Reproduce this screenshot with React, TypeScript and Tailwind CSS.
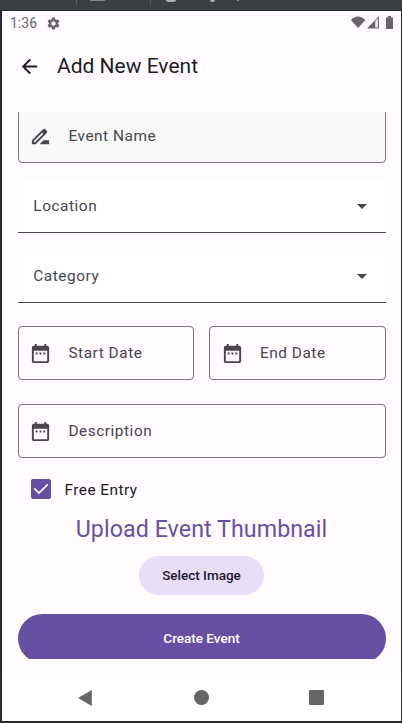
import type { ReactNode } from "react";

const icons = {
  calendar:
    "M19 4h-1V2h-2v2H8V2H6v2H5c-1.11 0-1.99.9-1.99 2L3 20c0 1.1.89 2 2 2h14c1.1 0 2-.9 2-2V6c0-1.1-.9-2-2-2zm0 16H5V9h14v11zM9 13H7v-2h2v2zm4 0h-2v-2h2v2zm4 0h-2v-2h2v2z",
  edit:
    "M18.41 5.8 17.2 4.59c-.78-.78-2.05-.78-2.83 0l-2.68 2.68L3 15.96V20h4.04l8.74-8.74 2.63-2.63c.79-.78.79-2.05 0-2.83zM6.21 18H5v-1.21l8.66-8.66 1.21 1.21L6.21 18zM11 20l4-4h6v4H11z",
  back: "M20 11H7.83l5.59-5.59L12 4l-8 8 8 8 1.41-1.41L7.83 13H20v-2z",
  gear:
    "M19.14 12.94c.04-.3.06-.61.06-.94 0-.32-.02-.64-.07-.94l2.03-1.58a.49.49 0 0 0 .12-.61l-1.92-3.32a.488.488 0 0 0-.59-.22l-2.39.96c-.5-.38-1.03-.7-1.62-.94l-.36-2.54a.484.484 0 0 0-.48-.41h-3.84c-.24 0-.43.17-.47.41l-.36 2.54c-.59.24-1.13.57-1.62.94l-2.39-.96c-.22-.08-.47 0-.59.22L2.74 8.87c-.12.21-.08.47.12.61l2.03 1.58c-.05.3-.09.63-.09.94s.02.64.07.94l-2.03 1.58a.49.49 0 0 0-.12.61l1.92 3.32c.12.22.37.29.59.22l2.39-.96c.5.38 1.03.7 1.62.94l.36 2.54c.05.24.24.41.48.41h3.84c.24 0 .44-.17.47-.41l.36-2.54c.59-.24 1.13-.56 1.62-.94l2.39.96c.22.08.47 0 .59-.22l1.92-3.32c.12-.22.07-.47-.12-.61l-2.01-1.58zM12 15.6c-1.98 0-3.6-1.62-3.6-3.6s1.62-3.6 3.6-3.6 3.6 1.62 3.6 3.6-1.62 3.6-3.6 3.6z",
};

function Icon({ d, className }: { d: string; className: string }) {
  return (
    <svg viewBox="0 0 24 24" fill="currentColor" className={`shrink-0 ${className}`}>
      <path d={d} />
    </svg>
  );
}

function Outlined({ icon, children, className = "" }: { icon: string; children: ReactNode; className?: string }) {
  return (
    <div className={`flex h-[54px] items-center rounded-[4px] border border-[#7a757f] pl-[10.900px] text-[#49454f] ${className}`}>
      <Icon d={icon} className="size-[23px]" />
      <span className="ml-[16px] pt-[2px] text-[15.4px] tracking-[0.54px]">{children}</span>
    </div>
  );
}

function Dropdown({ children }: { children: ReactNode }) {
  return (
    <div className="flex h-[54px] items-center justify-between rounded-t-[4px] border-b border-[#49454f] bg-white pr-[18.500px] pl-[15.800px] text-[#49454f]">
      <span className="pt-[2px] text-[15.4px] tracking-[0.54px]">{children}</span>
      <svg viewBox="0 0 10 5" className="mt-px h-[5px] w-[10px]" fill="currentColor">
        <path d="M0 0h10L5 5z" />
      </svg>
    </div>
  );
}

export default function App() {
  return (
    <div className="flex h-[723px] w-[402px] flex-col overflow-hidden bg-[#2b2b2d] font-['Roboto','Noto_Sans',sans-serif]">
      <div className="flex h-[11px] shrink-0 items-start border-b border-[#2b2b2d] bg-[#3c3f41]">
        <span className="ml-[76px] h-[5px] w-px bg-[#5f5c5b]" />
        <span className="ml-[13px] h-px w-[15px] bg-[#85888a]" />
        <span className="ml-[45px] h-[5px] w-px bg-[#555759]" />
        <span className="ml-[15px] h-[2px] w-[10px] rounded-b-full bg-[#afb1b3]" />
        <span className="ml-[34px] h-[2px] w-[5px] rounded-b-full bg-[#afb1b3]" />
        <span className="ml-[22px] h-px w-[2px] bg-[#85888a]" />
      </div>
      <div className="mr-px mb-[2px] ml-[2px] flex grow flex-col bg-[#fffbff]">
        <header className="flex h-[24px] shrink-0 items-center pr-[8px] pl-[8px] text-[#67656a]">
          <span className="w-[26px] text-[14px] leading-none whitespace-nowrap">1:36</span>
          <Icon d={icons.gear} className="ml-[10px] size-[15px]" />
          <svg viewBox="0 0 42 13" className="mt-[-1px] ml-auto h-[13px] w-[42px]" fill="currentColor">
            <path d="M0 4.2C4-.8 10.200-.8 14.200 4.200L7.100 12z" />
            <path d="M28 0v12.500H16z" />
            <path d="M24.200 5v6.500H27V2.300z" fill="#fffbff" opacity=".85" />
            <path d="M35 1.500h2V0h3v1.500h2V13h-7z" />
          </svg>
        </header>
        <div className="flex h-[62px] shrink-0 items-center pl-[16px] text-[#1c1b1f]">
          <Icon d={icons.back} className="size-[23px]" />
          <h1 className="ml-[16px] text-[21px] leading-none">Add New Event</h1>
        </div>
        <main className="mt-[15px] flex h-[547px] shrink-0 flex-col overflow-hidden pr-[15.500px] pl-[15.500px]">
          <Outlined icon={icons.edit} className="-mt-[3px] shrink-0 bg-[#f7f9f8]">Event Name</Outlined>
          <div className="mt-[16px] flex flex-col gap-[16px]">
            <Dropdown>Location</Dropdown>
            <Dropdown>Category</Dropdown>
          </div>
          <div className="mt-[23px] grid grid-cols-2 gap-[15px]">
            <Outlined icon={icons.calendar}>Start Date</Outlined>
            <Outlined icon={icons.calendar}>End Date</Outlined>
          </div>
          <Outlined icon={icons.calendar} className="mt-[24px] shrink-0">Description</Outlined>
          <div className="mt-[21px] ml-[13.500px] flex h-[20px] shrink-0 items-center">
            <span className="flex size-[20px] items-center justify-center rounded-[2px] bg-[#6750a4]">
              <svg viewBox="0 0 20 20" className="size-[20px]" fill="none" stroke="#fff" strokeWidth="1.7">
                <path d="M3.300 9.300 8 14 16.700 5.300" />
              </svg>
            </span>
            <span className="ml-[13.500px] pt-[3px] text-[15.4px] tracking-[0.45px] text-[#1c1b1f]">Free Entry</span>
          </div>
          <h2 className="mt-[14px] text-center text-[23.2px] leading-[32px] tracking-[0.08px] text-[#6750a4]">Upload Event Thumbnail</h2>
          <button className="mt-[11px] h-[39px] w-[125px] shrink-0 self-center rounded-full bg-[#e8def8] text-[13.5px] font-medium tracking-[0px] text-[#1d192b]">
            Select Image
          </button>
          <button className="mt-[19px] h-[49px] shrink-0 rounded-full bg-[#6750a4] text-[13.5px] font-medium tracking-[0px] text-white">
            Create Event
          </button>
        </main>
        <nav className="mt-[15px] flex grow items-center bg-white text-[#666]">
          <svg viewBox="0 0 14 16" className="ml-[76px] h-[16px] w-[14px]" fill="currentColor">
            <path d="M13.800 0v16L0 8z" />
          </svg>
          <span className="ml-[102px] size-[15px] rounded-full bg-[#666]" />
          <span className="ml-[100px] size-[15px] rounded-[1px] bg-[#666]" />
        </nav>
      </div>
    </div>
  );
}
